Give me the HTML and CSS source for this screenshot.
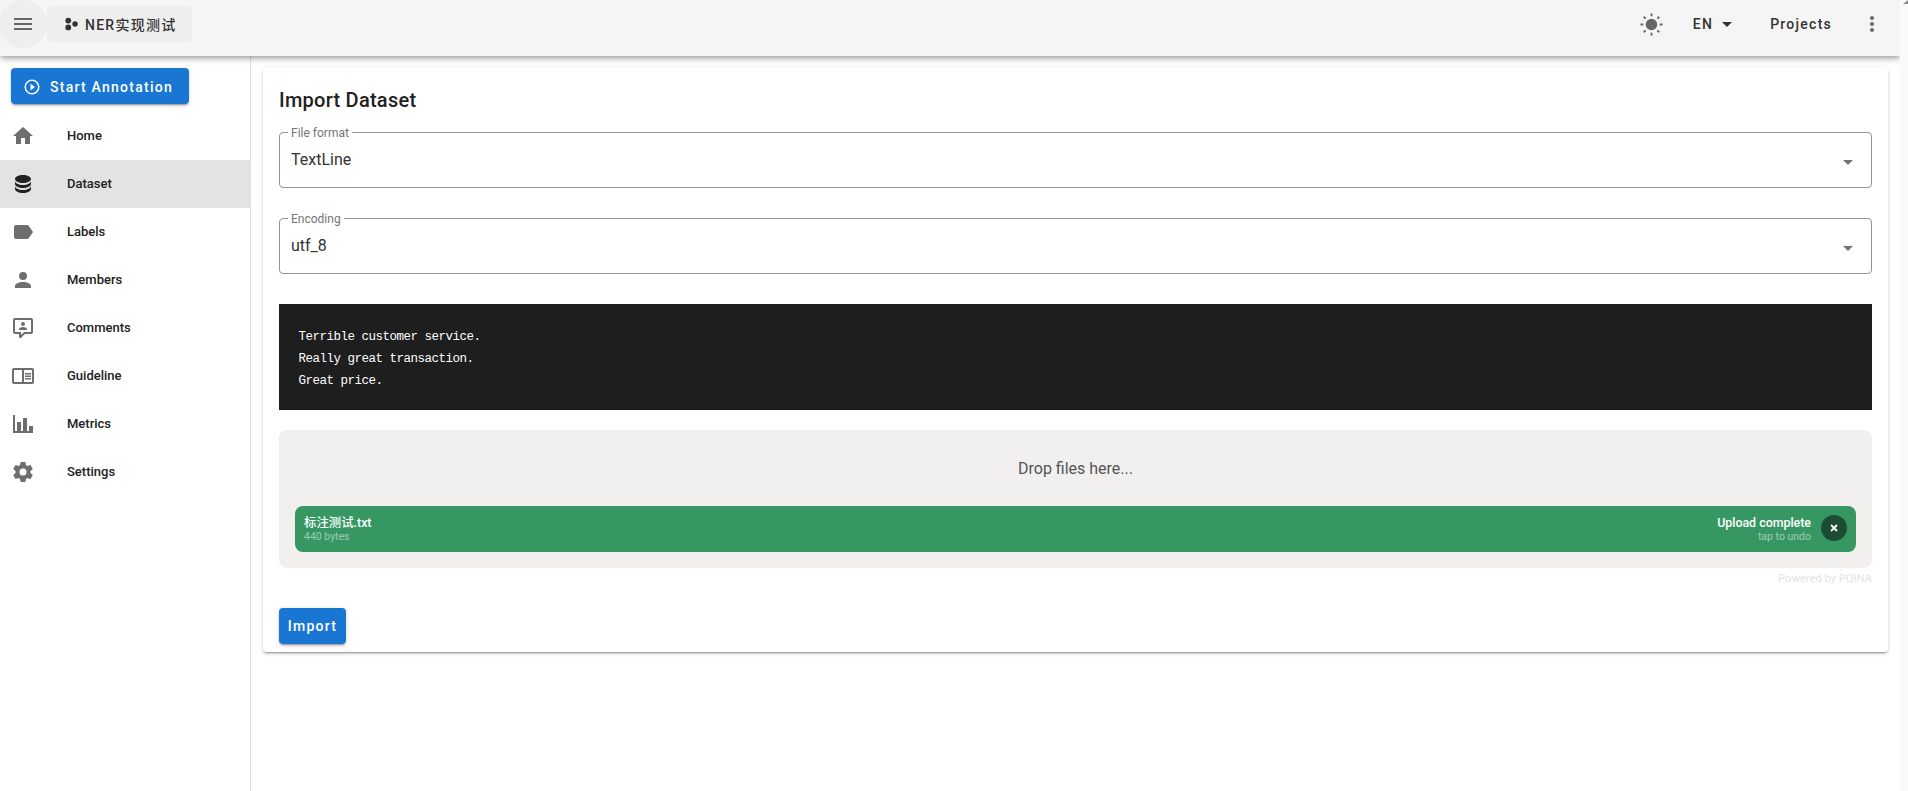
FILE: index.html
```html
<!DOCTYPE html>
<html lang="en">
<head>
    <meta charset="UTF-8">
    <title>Import Dataset</title>
    <link rel="stylesheet" href="styles.css">
</head>
<body>

<div class="app">
    <header class="app-bar">
        <button class="nav-toggle">
            <svg class="icon" viewBox="0 0 24 24"><path d="M3,6H21V8H3V6M3,11H21V13H3V11M3,16H21V18H3V16Z"/></svg>
        </button>
        <div class="project-chip">
            <svg class="chip-logo" viewBox="0 0 16 16"><circle cx="4" cy="3.8" r="3.6"/><circle cx="4" cy="12.2" r="3.6"/><circle cx="12.4" cy="8" r="3.4"/></svg>
            <span>NER实现测试</span>
        </div>
        <div class="bar-spacer"></div>
        <svg class="sun" viewBox="0 0 24 24">
            <circle cx="12" cy="12" r="6"/>
            <path d="M11,0.5H13V3.5H11ZM11,20.5H13V23.5H11ZM0.5,11H3.5V13H0.5ZM20.5,11H23.5V13H20.5ZM3.2,4.6L4.6,3.2L6.6,5.2L5.2,6.6ZM17.4,18.8L18.8,17.4L20.8,19.4L19.4,20.8ZM3.2,19.4L5.2,17.4L6.6,18.8L4.6,20.8ZM17.4,5.2L19.4,3.2L20.8,4.6L18.8,6.6Z"/>
        </svg>
        <div class="bar-btn lang">EN <svg class="caret" viewBox="0 0 24 24"><path d="M7,10L12,15L17,10H7Z"/></svg></div>
        <div class="bar-btn projects">Projects</div>
        <svg class="icon dots" viewBox="0 0 24 24"><path d="M12,16A2,2 0 0,1 14,18A2,2 0 0,1 12,20A2,2 0 0,1 10,18A2,2 0 0,1 12,16M12,10A2,2 0 0,1 14,12A2,2 0 0,1 12,14A2,2 0 0,1 10,12A2,2 0 0,1 12,10M12,4A2,2 0 0,1 14,6A2,2 0 0,1 12,8A2,2 0 0,1 10,6A2,2 0 0,1 12,4Z"/></svg>
    </header>

    <div class="layout">
        <nav class="sidebar">
            <button class="start-btn">
                <svg viewBox="0 0 24 24"><path d="M10,16.5L16,12L10,7.5V16.5M12,20C7.59,20 4,16.41 4,12C4,7.59 7.59,4 12,4C16.41,4 20,7.59 20,12C20,16.41 16.41,20 12,20M12,2A10,10 0 0,0 2,12A10,10 0 0,0 12,22A10,10 0 0,0 22,12A10,10 0 0,0 12,2Z"/></svg>
                Start Annotation
            </button>
            <ul class="menu">
                <li class="menu-item">
                    <svg viewBox="0 0 24 24"><path d="M10,20V14H14V20H19V12H22L12,3L2,12H5V20H10Z"/></svg>
                    <span>Home</span>
                </li>
                <li class="menu-item active">
                    <svg viewBox="0 0 24 24"><path d="M12,3C7.58,3 4,4.79 4,7C4,9.21 7.58,11 12,11C16.42,11 20,9.21 20,7C20,4.79 16.42,3 12,3M4,9V12C4,14.21 7.58,16 12,16C16.42,16 20,14.21 20,12V9C20,11.21 16.42,13 12,13C7.58,13 4,11.21 4,9M4,14V17C4,19.21 7.58,21 12,21C16.42,21 20,19.21 20,17V14C20,16.21 16.42,18 12,18C7.58,18 4,16.21 4,14Z"/></svg>
                    <span>Dataset</span>
                </li>
                <li class="menu-item">
                    <svg viewBox="0 0 24 24"><path d="M17.63,5.84C17.27,5.33 16.67,5 16,5H5A2,2 0 0,0 3,7V17A2,2 0 0,0 5,19H16C16.67,19 17.27,18.66 17.63,18.15L22,12L17.63,5.84Z"/></svg>
                    <span>Labels</span>
                </li>
                <li class="menu-item">
                    <svg viewBox="0 0 24 24"><path d="M12,4A4,4 0 0,1 16,8A4,4 0 0,1 12,12A4,4 0 0,1 8,8A4,4 0 0,1 12,4M12,14C16.42,14 20,15.79 20,18V20H4V18C4,15.79 7.58,14 12,14Z"/></svg>
                    <span>Members</span>
                </li>
                <li class="menu-item">
                    <svg viewBox="0 0 24 24"><path d="M4,2H20A2,2 0 0,1 22,4V16A2,2 0 0,1 20,18H13.9L10.2,21.7C10,21.9 9.8,22 9.5,22H9A1,1 0 0,1 8,21V18H4A2,2 0 0,1 2,16V4A2,2 0 0,1 4,2M4,4V16H10V19.1L13.1,16H20V4H4M12,6A2,2 0 0,1 14,8A2,2 0 0,1 12,10A2,2 0 0,1 10,8A2,2 0 0,1 12,6M16,14H8V13C8,11.7 10.7,11 12,11C13.3,11 16,11.7 16,13V14Z"/></svg>
                    <span>Comments</span>
                </li>
                <li class="menu-item">
                    <svg viewBox="0 0 24 24"><path d="M3,4H21A2,2 0 0,1 23,6V18A2,2 0 0,1 21,20H3A2,2 0 0,1 1,18V6A2,2 0 0,1 3,4M3,6V18H11V6H3M13,6V18H21V6H13M14,9H20V10.5H14V9M14,11.5H20V13H14V11.5M14,14H20V15.5H14V14Z"/></svg>
                    <span>Guideline</span>
                </li>
                <li class="menu-item">
                    <svg viewBox="0 0 24 24"><path d="M22,21H2V3H4V19H6V10H10V19H12V6H16V19H18V14H22V21Z"/></svg>
                    <span>Metrics</span>
                </li>
                <li class="menu-item">
                    <svg viewBox="0 0 24 24"><path d="M12,15.5A3.5,3.5 0 0,1 8.5,12A3.5,3.5 0 0,1 12,8.5A3.5,3.5 0 0,1 15.5,12A3.5,3.5 0 0,1 12,15.5M19.43,12.97C19.47,12.65 19.5,12.33 19.5,12C19.5,11.67 19.47,11.34 19.43,11L21.54,9.37C21.73,9.22 21.78,8.95 21.66,8.73L19.66,5.27C19.54,5.05 19.27,4.96 19.05,5.05L16.56,6.05C16.04,5.66 15.5,5.32 14.87,5.07L14.5,2.42C14.46,2.18 14.25,2 14,2H10C9.75,2 9.54,2.18 9.5,2.42L9.13,5.07C8.5,5.32 7.96,5.66 7.44,6.05L4.95,5.05C4.73,4.96 4.46,5.05 4.34,5.27L2.34,8.73C2.21,8.95 2.27,9.22 2.46,9.37L4.57,11C4.53,11.34 4.5,11.67 4.5,12C4.5,12.33 4.53,12.65 4.57,12.97L2.46,14.63C2.27,14.78 2.21,15.05 2.34,15.27L4.34,18.73C4.46,18.95 4.73,19.03 4.95,18.95L7.44,17.94C7.96,18.34 8.5,18.68 9.13,18.93L9.5,21.58C9.54,21.82 9.75,22 10,22H14C14.25,22 14.46,21.82 14.5,21.58L14.87,18.93C15.5,18.67 16.04,18.34 16.56,17.94L19.05,18.95C19.27,19.03 19.54,18.95 19.66,18.73L21.66,15.27C21.78,15.05 21.73,14.78 21.54,14.63L19.43,12.97Z"/></svg>
                    <span>Settings</span>
                </li>
            </ul>
        </nav>

        <main class="content">
            <section class="card">
                <h1 class="card-title">Import Dataset</h1>

                <fieldset class="field">
                    <legend>File format</legend>
                    <span class="field-value">TextLine</span>
                    <svg class="field-caret" viewBox="0 0 24 24"><path d="M7,10L12,15L17,10H7Z"/></svg>
                </fieldset>

                <fieldset class="field">
                    <legend>Encoding</legend>
                    <span class="field-value">utf_8</span>
                    <svg class="field-caret" viewBox="0 0 24 24"><path d="M7,10L12,15L17,10H7Z"/></svg>
                </fieldset>

                <pre class="sample">Terrible customer service.
Really great transaction.
Great price.</pre>

                <div class="dropzone">
                    <div class="drop-label">Drop files here...</div>
                    <div class="file-row">
                        <div class="file-info">
                            <div class="file-main">标注测试.txt</div>
                            <div class="file-sub">440 bytes</div>
                        </div>
                        <div class="file-status">
                            <div class="file-main">Upload complete</div>
                            <div class="file-sub">tap to undo</div>
                        </div>
                        <div class="file-undo">
                            <svg viewBox="0 0 12 12"><path d="M3,3L9,9M9,3L3,9"/></svg>
                        </div>
                    </div>
                </div>
                <div class="credit">Powered by PQINA</div>

                <button class="import-btn">Import</button>
            </section>
        </main>
    </div>
</div>

<div class="scroll-strip"><div class="scroll-arrow"></div></div>

</body>
</html>
```

FILE: styles.css
```css
* {
    margin: 0;
    padding: 0;
    box-sizing: border-box;
}

body {
    font-family: Roboto, "Noto Sans CJK SC", sans-serif;
    background-color: #fff;
    color: #212121;
    height: 791px;
    overflow: hidden;
    display: flex;
}

button {
    border: none;
    font-family: inherit;
    cursor: pointer;
}

.app {
    width: 1900px;
    height: 791px;
    flex-shrink: 0;
    display: flex;
    flex-direction: column;
}

.scroll-strip {
    flex: 1;
    background-color: #fafafa;
    display: flex;
    justify-content: flex-end;
    position: relative;
    z-index: 3;
}

.scroll-arrow {
    width: 0;
    height: 0;
    border-left: 5px solid transparent;
    border-bottom: 4px solid #8a8a8a;
}

.app-bar {
    height: 56px;
    padding-bottom: 8px;
    flex-shrink: 0;
    display: flex;
    align-items: center;
    background-color: #f5f5f5;
    box-shadow: 0 2px 4px -1px rgba(0, 0, 0, 0.2), 0 4px 5px 0 rgba(0, 0, 0, 0.14), 0 1px 10px 0 rgba(0, 0, 0, 0.12);
    position: relative;
    z-index: 2;
}

.icon {
    width: 24px;
    height: 24px;
    fill: #666;
}

.nav-toggle {
    width: 48px;
    height: 48px;
    margin-left: -1px;
    border-radius: 50%;
    background-color: #eee;
    display: flex;
    align-items: center;
    justify-content: center;
}

.project-chip {
    height: 36px;
    width: 145px;
    border-radius: 4px;
    background-color: #eee;
    display: flex;
    align-items: center;
    padding-left: 18px;
    gap: 7px;
    font-size: 14px;
    font-weight: 500;
    letter-spacing: 1.25px;
    color: #333;
}

.chip-logo {
    width: 13px;
    height: 14px;
    flex-shrink: 0;
    fill: #333;
}

.bar-spacer {
    flex: 1;
}

.sun {
    width: 23px;
    height: 23px;
    fill: #666;
}

.bar-btn {
    font-size: 14px;
    font-weight: 500;
    letter-spacing: 1.25px;
    color: #333;
    display: flex;
    align-items: center;
}

.lang {
    margin-left: 30px;
    gap: 2px;
}

.caret {
    width: 24px;
    height: 24px;
    fill: #333;
}

.projects {
    margin-left: 31px;
}

.dots {
    margin-left: 28px;
    margin-right: 16px;
}

.layout {
    flex: 1;
    display: flex;
    min-height: 0;
}

.sidebar {
    width: 251px;
    border-right: 1px solid #e0e0e0;
    padding-top: 12px;
    flex-shrink: 0;
}

.start-btn {
    width: 178px;
    height: 36px;
    margin-left: 11px;
    border-radius: 4px;
    background-color: #1976d2;
    color: #fff;
    font-size: 14px;
    font-weight: 500;
    letter-spacing: 1.25px;
    display: flex;
    align-items: center;
    padding: 1px 0 0 12px;
    gap: 9px;
    box-shadow: 0 3px 1px -2px rgba(0, 0, 0, 0.2), 0 2px 2px 0 rgba(0, 0, 0, 0.14), 0 1px 5px 0 rgba(0, 0, 0, 0.12);
}

.start-btn svg {
    width: 18px;
    height: 18px;
    fill: #fff;
}

.menu {
    list-style: none;
    margin-top: 8px;
}

.menu-item {
    height: 48px;
    display: flex;
    align-items: center;
    padding-left: 11px;
    font-size: 13px;
    font-weight: 500;
    color: #212121;
}

.menu-item span {
    margin-bottom: 2px;
}

.menu-item svg {
    width: 24px;
    height: 24px;
    fill: #6e6e6e;
    margin-right: 32px;
}

.menu-item.active {
    background-color: #e3e3e3;
}

.menu-item.active svg {
    fill: #222;
}

.content {
    flex: 1;
    padding: 12px 12px 0;
    min-width: 0;
}

.card {
    height: 584px;
    background-color: #fff;
    border-radius: 4px;
    padding: 16px;
    box-shadow: 0 3px 1px -2px rgba(0, 0, 0, 0.2), 0 2px 2px 0 rgba(0, 0, 0, 0.14), 0 1px 5px 0 rgba(0, 0, 0, 0.12);
}

.card-title {
    font-size: 20px;
    font-weight: 500;
    letter-spacing: 0.25px;
    line-height: 32px;
    margin-bottom: 9px;
}

.field {
    height: 63px;
    border: 1px solid #949494;
    border-radius: 4px;
    padding: 0 11px;
    margin-bottom: 23px;
    display: flex;
    align-items: center;
    position: relative;
}

.field legend {
    font-size: 12px;
    color: #757575;
    padding: 2px 3px 0;
    margin-left: -3px;
    line-height: 12px;
}

.field-value {
    font-size: 16px;
    color: #333;
    margin-bottom: 8px;
}

.field-caret {
    position: absolute;
    right: 11px;
    top: 11px;
    width: 24px;
    height: 24px;
    fill: #757575;
}

.sample {
    height: 106px;
    background-color: #1e1e1e;
    color: #fff;
    font-family: "Liberation Mono", monospace;
    font-size: 12.5px;
    letter-spacing: -0.5px;
    line-height: 22px;
    padding: 22px 19.5px;
    margin-top: 30px;
    margin-bottom: 20px;
}

.dropzone {
    height: 138px;
    background-color: #f1f0ef;
    border-radius: 8px;
    padding: 0 16px;
}

.drop-label {
    height: 76px;
    display: flex;
    align-items: center;
    justify-content: center;
    font-size: 16px;
    color: #555;
}

.file-row {
    height: 46px;
    background-color: #369763;
    border-radius: 8px;
    color: #fff;
    display: flex;
    align-items: center;
    padding: 0 9px 2px;
}

.file-info {
    flex: 1;
}

.file-status {
    text-align: right;
}

.file-main {
    font-size: 12.4px;
    font-weight: 500;
    line-height: 16px;
}

.file-sub {
    font-size: 10.5px;
    line-height: 11px;
    opacity: 0.5;
}

.file-undo {
    width: 26px;
    height: 26px;
    border-radius: 50%;
    background-color: #1c4c33;
    margin-left: 10px;
    display: flex;
    align-items: center;
    justify-content: center;
}

.file-undo svg {
    width: 12px;
    height: 12px;
    fill: none;
    stroke: #fff;
    stroke-width: 1.8;
}

.credit {
    text-align: right;
    font-size: 11.2px;
    color: #e4e4e4;
    line-height: 12px;
    margin-top: 5px;
    margin-bottom: 23px;
}

.import-btn {
    width: 67px;
    height: 36px;
    border-radius: 4px;
    background-color: #1976d2;
    color: #fff;
    font-size: 14px;
    font-weight: 500;
    letter-spacing: 1.25px;
    box-shadow: 0 3px 1px -2px rgba(0, 0, 0, 0.2), 0 2px 2px 0 rgba(0, 0, 0, 0.14), 0 1px 5px 0 rgba(0, 0, 0, 0.12);
}
```
